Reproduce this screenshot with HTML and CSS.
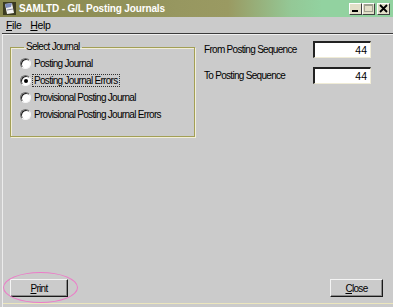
FILE: index.html
```html
<!DOCTYPE html>
<html>
<head>
<meta charset="utf-8">
<link rel="stylesheet" href="styles.css">
</head>
<body>
<div class="window">
  <div class="titlebar">
    <svg class="appicon" width="13" height="13" viewBox="0 0 13 13">
      <rect x="0" y="0" width="13" height="13" fill="#3a3a20"/>
      <polygon points="2,2 9,1 11,11 4,12" fill="#f4f4f4"/>
      <polygon points="2,2 9,1 8,5 3,6" fill="#7a88b8"/>
      <line x1="4" y1="8" x2="10" y2="7" stroke="#9090a0" stroke-width="1"/>
    </svg>
    <span class="title">SAMLTD - G/L Posting Journals</span>
    <div class="winbtns">
      <span class="wbtn"><svg width="11" height="9" viewBox="0 0 11 9"><rect x="2" y="6" width="6" height="2" fill="#000"/></svg></span>
      <span class="wbtn"><svg width="11" height="9" viewBox="0 0 11 9"><rect x="1.5" y="0.5" width="8" height="7" fill="none" stroke="#a0a090"/><line x1="1.5" y1="1.5" x2="9.5" y2="1.5" stroke="#a0a090"/></svg></span>
      <span class="wbtn close"><svg width="11" height="9" viewBox="0 0 11 9"><path d="M2 1 L9 8 M9 1 L2 8" stroke="#000" stroke-width="1.8"/></svg></span>
    </div>
  </div>
  <div class="menubar">
    <span class="menu"><u>F</u>ile</span>
    <span class="menu"><u>H</u>elp</span>
  </div>
  <div class="sep"></div>
  <div class="main">
    <div class="content">
      <fieldset class="group">
        <legend>Select Journal</legend>
        <div class="radio"><span class="dot"></span><span class="rlabel">Posting Journal</span></div>
        <div class="radio"><span class="dot on"></span><span class="rlabel focus">Posting Journal Errors</span></div>
        <div class="radio"><span class="dot"></span><span class="rlabel">Provisional Posting Journal</span></div>
        <div class="radio"><span class="dot"></span><span class="rlabel">Provisional Posting Journal Errors</span></div>
      </fieldset>
      <div class="fields">
        <div class="frow"><span class="flabel">From Posting Sequence</span><span class="input">44</span></div>
        <div class="frow"><span class="flabel">To Posting Sequence</span><span class="input">44</span></div>
      </div>
    </div>
    <div class="footer">
      <span class="btn print"><u>P</u>rint<span class="ring"></span></span>
      <span class="btn close-btn"><u>C</u>lose</span>
    </div>
    <div class="bottomline"></div>
  </div>
</div>
</body>
</html>
```

FILE: styles.css
```css
html, body {
  margin: 0;
  padding: 0;
  background: #cbcbcb;
}
body {
  font-family: "Liberation Sans", Arial, sans-serif;
  font-size: 10px;
  letter-spacing: -0.7px;
  color: #000;
}
.window {
  width: 393px;
  height: 307px;
  display: flex;
  flex-direction: column;
  overflow: hidden;
}
.titlebar {
  height: 17px;
  flex: none;
  display: flex;
  align-items: center;
  padding-left: 3px;
  background: linear-gradient(90deg, #86864c 0%, #979760 45%, #9a9a62 58%, #94c896 74%, #92d2a0 82%, #92d2a0 100%);
}
.appicon {
  flex: none;
}
.title {
  margin-left: 3px;
  color: #fff;
  font-weight: bold;
  font-size: 10px;
  letter-spacing: -0.15px;
}
.winbtns {
  margin-left: auto;
  margin-right: 3px;
  display: flex;
}
.wbtn {
  width: 11px;
  height: 10px;
  background: #e2dfc8;
  border-top: 1px solid #fff;
  border-left: 1px solid #fff;
  border-right: 1px solid #404040;
  border-bottom: 1px solid #404040;
  display: flex;
  align-items: center;
  justify-content: center;
}
.wbtn.close {
  margin-left: 2px;
}
.menubar {
  height: 16px;
  flex: none;
  display: flex;
  align-items: center;
  padding-left: 6px;
  gap: 9px;
  font-size: 10.5px;
  letter-spacing: -0.4px;
}
.sep {
  height: 1px;
  flex: none;
  background: #3a3a3a;
  border-bottom: 1px solid #f0f0f0;
  margin-left: 2px;
}
.main {
  flex: 1;
  display: flex;
  flex-direction: column;
  border-left: 1px solid #ececec;
  margin-left: 2px;
}
.content {
  flex: 1;
  display: flex;
  align-items: flex-start;
  padding: 6px 0 0 7px;
}
.group {
  margin: 0;
  width: 185px;
  box-sizing: border-box;
  border: 1px solid #a29f56;
  box-shadow: 1px 1px 0 #f2eed8, inset 1px 1px 0 #f2eed8;
  padding: 2px 0 13px 9px;
}
.group legend {
  padding: 0 2px;
  margin-left: 4px;
  line-height: 12px;
}
.radio {
  height: 17px;
  display: flex;
  align-items: center;
}
.dot {
  width: 9px;
  height: 9px;
  border-radius: 50%;
  background: #fff;
  border: 1px solid;
  border-color: #707070 #f6f6f6 #f6f6f6 #707070;
  box-shadow: inset 1px 1px 0 #202020;
  position: relative;
  flex: none;
}
.dot.on::after {
  content: "";
  position: absolute;
  left: 2.5px;
  top: 2.5px;
  width: 4px;
  height: 4px;
  border-radius: 50%;
  background: #000;
}
.rlabel {
  margin-left: 1px;
  padding: 0 1px;
  line-height: 11px;
  border: 1px dotted transparent;
}
.rlabel.focus {
  border-color: #303030;
}
.fields {
  margin-left: 9px;
  display: flex;
  flex-direction: column;
  gap: 9px;
}
.frow {
  height: 17px;
  display: flex;
  align-items: center;
}
.flabel {
  width: 109px;
}
.input {
  width: 58px;
  height: 17px;
  box-sizing: border-box;
  background: #fff;
  border-top: 2px solid #222;
  border-left: 2px solid #222;
  border-right: 1px solid #f0ecd6;
  border-bottom: 1px solid #f0ecd6;
  text-align: right;
  padding-right: 3px;
  line-height: 14px;
  font-size: 10.5px;
  letter-spacing: 0;
}
.footer {
  display: flex;
  justify-content: space-between;
  padding: 0 10px 6px 7px;
}
.btn {
  height: 18px;
  box-sizing: border-box;
  display: flex;
  align-items: center;
  justify-content: center;
  background: #cbcbcb;
  border-top: 1px solid #f4f4f4;
  border-left: 1px solid #f4f4f4;
  border-right: 1px solid #1a1a1a;
  border-bottom: 1px solid #1a1a1a;
  box-shadow: inset -1px -1px 0 #8a8a8a;
  position: relative;
}
.print {
  width: 58px;
}
.close-btn {
  width: 53px;
}
.ring {
  position: absolute;
  left: -8px;
  top: -8px;
  width: 73px;
  height: 29px;
  border: 1px solid #ec7cc8;
  border-radius: 50%;
}
.bottomline {
  height: 1px;
  background: #ece6bc;
  margin-bottom: 3px;
}
```
